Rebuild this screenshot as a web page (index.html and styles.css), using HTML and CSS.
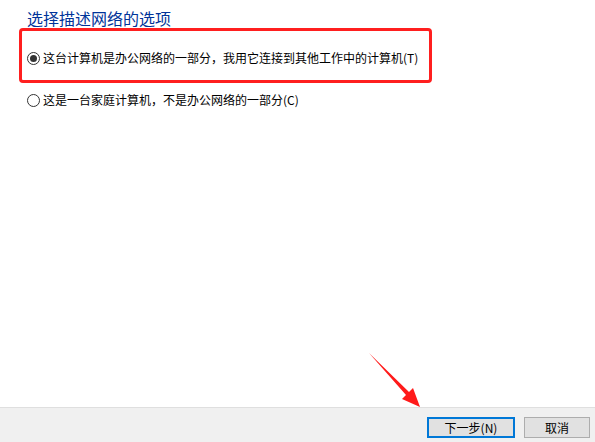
FILE: index.html
```html
<html>
  <head>
    <title>网络位置</title>
    <meta charset="utf-8">
    <link rel="stylesheet" href="styles.css">
  </head>
  <body>
    <div class="page">
      <div class="content">
        <h2 class="main-title">选择描述网络的选项</h2>
        <div class="highlight-box">
          <label class="option">
            <span class="radio checked"></span>
            <span>这台计算机是办公网络的一部分，我用它连接到其他工作中的计算机(T)</span>
          </label>
        </div>
        <label class="option second">
          <span class="radio"></span>
          <span>这是一台家庭计算机，不是办公网络的一部分(C)</span>
        </label>
      </div>
      <div class="footer">
        <button class="btn btn-default">下一步(N)</button>
        <button class="btn btn-cancel">取消</button>
      </div>
    </div>
    <!-- red pointer arrow drawn over the dialog -->
    <svg class="pointer" width="595" height="442" viewBox="0 0 595 442">
      <polygon points="369,353 409,392 413,388 420,407 402,399 406,395" fill="#ff1a1a"/>
    </svg>
  </body>
</html>
```

FILE: styles.css
```css
* {
  padding: 0;
  margin: 0;
  box-sizing: border-box;
}
body {
  background-color: #ffffff;
  font-family: "Noto Sans CJK SC", "Liberation Sans", sans-serif;
  font-size: 12px;
  color: #000000;
  overflow: hidden;
}
.page {
  display: flex;
  flex-direction: column;
  height: 442px;
}
.content {
  flex: 1;
  padding: 8px 0 0 19px;
}
.main-title {
  font-size: 16px;
  font-weight: normal;
  line-height: 21px;
  color: #003399;
  padding-left: 8px;
  margin-bottom: -1px;
}
.highlight-box {
  width: 413px;
  height: 55px;
  border: 3px solid #ff1f1f;
  border-radius: 4px;
  padding: 19px 0 0 5px;
}
.option {
  display: flex;
  align-items: center;
  gap: 3px;
  height: 16px;
  line-height: 16px;
  white-space: nowrap;
}
.option.second {
  margin: 9px 0 0 8px;
}
.radio {
  width: 13px;
  height: 13px;
  border: 1px solid #333333;
  border-radius: 50%;
  display: flex;
  align-items: center;
  justify-content: center;
  flex-shrink: 0;
}
.radio.checked::after {
  content: "";
  width: 7px;
  height: 7px;
  border-radius: 50%;
  background-color: #333333;
}
.footer {
  height: 35px;
  background-color: #f0f0f0;
  border-top: 1px solid #dfdfdf;
  display: flex;
  justify-content: flex-end;
  gap: 9px;
  padding: 9px 5px 0 0;
}
.btn {
  height: 21px;
  font-family: inherit;
  font-size: 12px;
  line-height: 17px;
  color: #000000;
  background-color: #e1e1e1;
  border: 1px solid #adadad;
  border-radius: 0;
}
.btn-default {
  width: 88px;
  border: 2px solid #0078d7;
}
.btn-cancel {
  width: 66px;
}
.pointer {
  position: absolute;
  left: 0;
  top: 0;
  pointer-events: none;
}
```
